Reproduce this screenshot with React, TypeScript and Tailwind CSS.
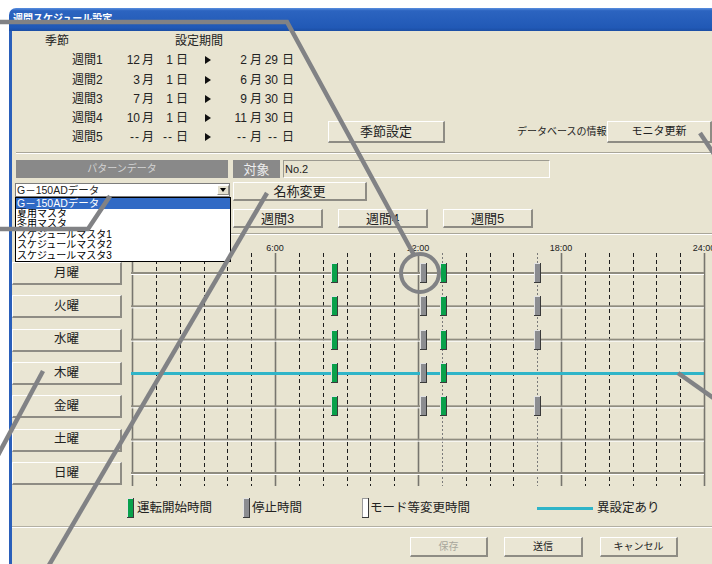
import React from "react";

const days = ["月曜", "火曜", "水曜", "木曜", "金曜", "土曜", "日曜"];

// [label, start month, start day, end month, end day]
const seasons = [
  ["週間1", "12", "1", "2", "29"],
  ["週間2", "3", "1", "6", "30"],
  ["週間3", "7", "1", "9", "30"],
  ["週間4", "10", "1", "11", "30"],
  ["週間5", "--", "--", "--", "--"],
];

const HOUR = 143 / 6;
const X = (h: number) => 10 + h * HOUR;
const rowY = days.map((_, i) => 38 + i * 33.333);

type Kind = "g" | "s" | "w";
const full: [Kind, number][] = [
  ["g", 8.5],
  ["s", 12.25],
  ["g", 13.05],
  ["s", 17],
];
const marks: [Kind, number][][] = [full, full, full, full.slice(0, 3), full, [], []];

function Btn({
  className = "",
  muted = false,
  children,
}: {
  className?: string;
  muted?: boolean;
  children?: React.ReactNode;
}) {
  return (
    <div
      className={
        "flex shrink-0 items-center justify-center border-t border-l border-b-2 border-r-2 border-t-white border-l-white border-b-[#8e8c84] border-r-[#8e8c84] bg-[#eae6d4] leading-none " +
        (muted ? "text-[#a8a69c] " : "text-[#222] ") +
        className
      }
    >
      {children}
    </div>
  );
}

function Mark({ x, y, kind }: { x: number; y: number; kind: Kind }) {
  const fill = kind === "g" ? "#09a14b" : kind === "s" ? "#8b8c90" : "#ffffff";
  const light = kind === "w" ? "#9a9a9a" : "#e2e2e2";
  return (
    <g>
      <rect x={x} y={y} width={7} height={20} fill={fill} />
      <rect x={x} y={y} width={1} height={20} fill={light} />
      <rect x={x} y={y} width={7} height={1} fill={light} />
      <rect x={x + 6} y={y} width={1} height={20} fill="#3a3a3a" />
      <rect x={x} y={y + 19} width={7} height={1} fill="#3a3a3a" />
    </g>
  );
}

function LegendMark({ kind }: { kind: Kind }) {
  return (
    <svg width={7} height={20} className="block shrink-0">
      <Mark x={0} y={0} kind={kind} />
    </svg>
  );
}

function Chart() {
  const hours = Array.from({ length: 25 }, (_, i) => i);
  return (
    <svg width={590} height={255} className="block shrink-0 overflow-visible">
      {hours.map((h) => {
        const x = Math.round(X(h)) + 0.5;
        if (h % 6 === 0)
          return <line key={h} x1={x} x2={x} y1={18} y2={251} stroke="#77756e" strokeWidth={1.6} />;
        const grey = h === 13 || h === 17;
        return (
          <line
            key={h}
            x1={x}
            x2={x}
            y1={18}
            y2={251}
            stroke={grey ? "#7a7a7a" : "#1e1e1e"}
            strokeWidth={1}
            strokeDasharray={grey ? "2 2" : "4 3"}
          />
        );
      })}
      {rowY.map((y, i) => (
        <g key={i}>
          <rect x={X(0) - 1} y={y - 1} width={X(24) - X(0) + 1} height={2} fill="#8f8c80" />
          <rect x={X(0) - 1} y={y + 1} width={X(24) - X(0) + 1} height={1} fill="#ffffff" />
        </g>
      ))}
      <rect x={X(0) - 1} y={rowY[3] - 1} width={X(24) - X(0) + 1} height={3} fill="#2fb4c8" />
      {marks.map((row, i) =>
        row.map(([k, t], j) => <Mark key={i + "-" + j} x={Math.round(X(t) - 3.5)} y={Math.round(rowY[i]) - 10} kind={k} />)
      )}
      {[6, 12, 18, 24].map((h) => (
        <text
          key={h}
          x={X(h)}
          y={15.5}
          textAnchor="middle"
          fontSize={9}
          fill="#222"
          fontFamily="'Liberation Sans', sans-serif"
        >
          {h}:00
        </text>
      ))}
    </svg>
  );
}

function Callouts() {
  return (
    <svg
      width={712}
      height={564}
      className="pointer-events-none absolute left-0 top-0 z-20"
      fill="none"
      stroke="#818285"
      strokeWidth={4.5}
    >
      <polyline points="-5,22 287,22 414,255" />
      <circle cx={420} cy={273} r={19} strokeWidth={4} />
      <polyline points="-5,229 88,229 110,196" />
      <line x1={267} y1={193} x2={45} y2={572} />
      <line x1={43} y1={371} x2={-3} y2={457} />
      <line x1={700} y1={133} x2={720} y2={163} />
      <line x1={678} y1={373} x2={732} y2={411} />
    </svg>
  );
}

export default function App() {
  return (
    <div className="relative h-[564px] w-[712px] overflow-hidden bg-white font-['Liberation_Sans','Noto_Sans_CJK_JP',sans-serif] text-[#222]">
      <div className="ml-[9px] mt-[8px] w-[720px]">
        {/* title bar */}
        <div className="h-[23px] rounded-tl-[7px] bg-[linear-gradient(#5a8fe0,#2c64c0_12%,#2159b6_85%,#1b4ea4)] pl-[4px] pt-[6px] text-[10px] font-bold leading-none text-white">
          週間スケジュール設定
        </div>

        <div className="h-[560px] border-l-[3px] border-l-[#2a5fba] bg-[#e8e4d1]">
          {/* season block */}
          <div className="flex h-[121px]">
            <div className="w-[316px] pt-[0.5px] text-[12px] leading-none">
              <div className="flex h-[19.25px] items-center">
                <span className="ml-[33px]">季節</span>
                <span className="ml-[106px]">設定期間</span>
              </div>
              {seasons.map(([label, sm, sd, em, ed]) => (
                <div key={label} className="flex h-[19.25px] items-center">
                  <span className="ml-[60px] w-[40px]">{label}</span>
                  <span className={"w-[28px] text-right " + (sm === "--" ? "tracking-[1px]" : "")}>{sm}</span>
                  <span className="w-[13px] pl-[2px]">月</span>
                  <span className={"w-[20px] text-right " + (sd === "--" ? "tracking-[1px]" : "")}>{sd}</span>
                  <span className="w-[15px] pl-[3px]">日</span>
                  <span className="flex w-[30px] pl-[17px]">
                    <span className="h-0 w-0 border-y-[4px] border-l-[6px] border-y-transparent border-l-[#111]" />
                  </span>
                  <span className={"w-[29px] text-right " + (em === "--" ? "tracking-[1px]" : "")}>{em}</span>
                  <span className="w-[15px] pl-[3px]">月</span>
                  <span className={"w-[16px] text-right " + (ed === "--" ? "tracking-[1px]" : "")}>{ed}</span>
                  <span className="pl-[4px]">日</span>
                </div>
              ))}
            </div>
            <div className="mb-[9px] flex h-[22px] items-center self-end">
              <Btn className="h-[22px] w-[117px] text-[13px]">季節設定</Btn>
              <span className="ml-[72px] w-[90px] text-[10px] leading-none">データベースの情報</span>
              <Btn className="h-[22px] w-[105px] text-[11px]">モニタ更新</Btn>
            </div>
          </div>

          <div className="ml-[4px] h-[2px] border-t border-b border-t-[#a9a699] border-b-white" />

          {/* pattern data block */}
          <div className="pt-[6px]">
            <div className="ml-[4px] flex h-[18px]">
              <div className="flex w-[212px] items-center justify-center bg-[#898989] text-[10px] leading-none text-[#d4d4d4]">
                パターンデータ
              </div>
              <div className="ml-[5px] flex w-[47px] items-center justify-center bg-[#898989] text-[13px] leading-none text-[#ededed]">
                対象
              </div>
              <div className="ml-[3px] flex w-[267px] items-center border border-t-[#9c9a90] border-l-[#9c9a90] border-b-white border-r-white pl-[1px] text-[11px] leading-none">
                No.2
              </div>
            </div>

            <div className="relative ml-[3px] mt-[4px] flex h-[19px]">
              <div className="relative mt-[1px] flex h-[14px] w-[215px] items-center border border-[#7c7c7c] bg-white">
                <span className="pl-[1px] text-[10.5px] leading-none">G－150ADデータ</span>
                <div className="absolute right-0 top-[1px] flex h-[10px] w-[12px] items-center justify-center border-t border-l border-b border-r border-t-white border-l-white border-b-[#8e8c84] border-r-[#8e8c84] bg-[#e4e0cf]">
                  <span className="h-0 w-0 border-x-[3px] border-t-[4px] border-x-transparent border-t-black" />
                </div>
              </div>
              <Btn className="ml-[3px] h-[19px] w-[134px] text-[13px]">名称変更</Btn>

              <div className="absolute left-0 top-[15px] z-10 h-[65px] w-[216px] border border-black bg-white text-[10px] leading-[10.5px] text-black">
                <div className="h-[10.5px] bg-[#316ac5] pl-[1px] text-[10.5px] text-white">G－150ADデータ</div>
                <div className="h-[10.5px] pl-[1px]">夏用マスタ</div>
                <div className="h-[10.5px] pl-[1px]">冬用マスタ</div>
                <div className="h-[10.5px] pl-[1px]">スケジュールマスタ1</div>
                <div className="h-[10.5px] pl-[1px]">スケジュールマスタ2</div>
                <div className="h-[10.5px] pl-[1px]">スケジュールマスタ3</div>
              </div>
            </div>

            <div className="ml-[11px] mt-[8px] flex h-[19px] gap-[15px]">
              {["週間1", "週間2", "週間3", "週間4", "週間5"].map((w) => (
                <Btn key={w} className="h-[19px] w-[90px] text-[13px]">
                  {w}
                </Btn>
              ))}
            </div>
          </div>

          <div className="ml-[4px] mt-[5px] h-[2px] border-t border-b border-t-[#a9a699] border-b-white" />

          {/* weekly chart */}
          <div className="flex">
            <div className="flex w-[110px] shrink-0 flex-col gap-[10.33px] pt-[27px]">
              {days.map((d) => (
                <Btn key={d} className="h-[23px] w-[110px] text-[12.5px]">
                  {d}
                </Btn>
              ))}
            </div>
            <Chart />
          </div>

          <div className="mt-[8px] flex h-[20px] items-center text-[12.5px] leading-none">
            <span className="ml-[115px]">
              <LegendMark kind="g" />
            </span>
            <span className="ml-[3px] w-[106px]">運転開始時間</span>
            <LegendMark kind="s" />
            <span className="ml-[2px] w-[110px]">停止時間</span>
            <LegendMark kind="w" />
            <span className="ml-[1px] w-[167px]">モード等変更時間</span>
            <span className="h-[3px] w-[56px] bg-[#2fb4c8]" />
            <span className="ml-[4px]">異設定あり</span>
          </div>

          <div className="mt-[8px] h-[2px] border-t border-b border-t-[#b3b0a3] border-b-white" />

          <div className="mt-[9px] flex h-[20px] text-[10px]">
            <Btn muted className="ml-[398px] h-[20px] w-[78px]">
              保存
            </Btn>
            <Btn className="ml-[16px] h-[20px] w-[79px]">送信</Btn>
            <Btn className="ml-[17px] h-[20px] w-[78px]">キャンセル</Btn>
          </div>
        </div>
      </div>
      <Callouts />
    </div>
  );
}
